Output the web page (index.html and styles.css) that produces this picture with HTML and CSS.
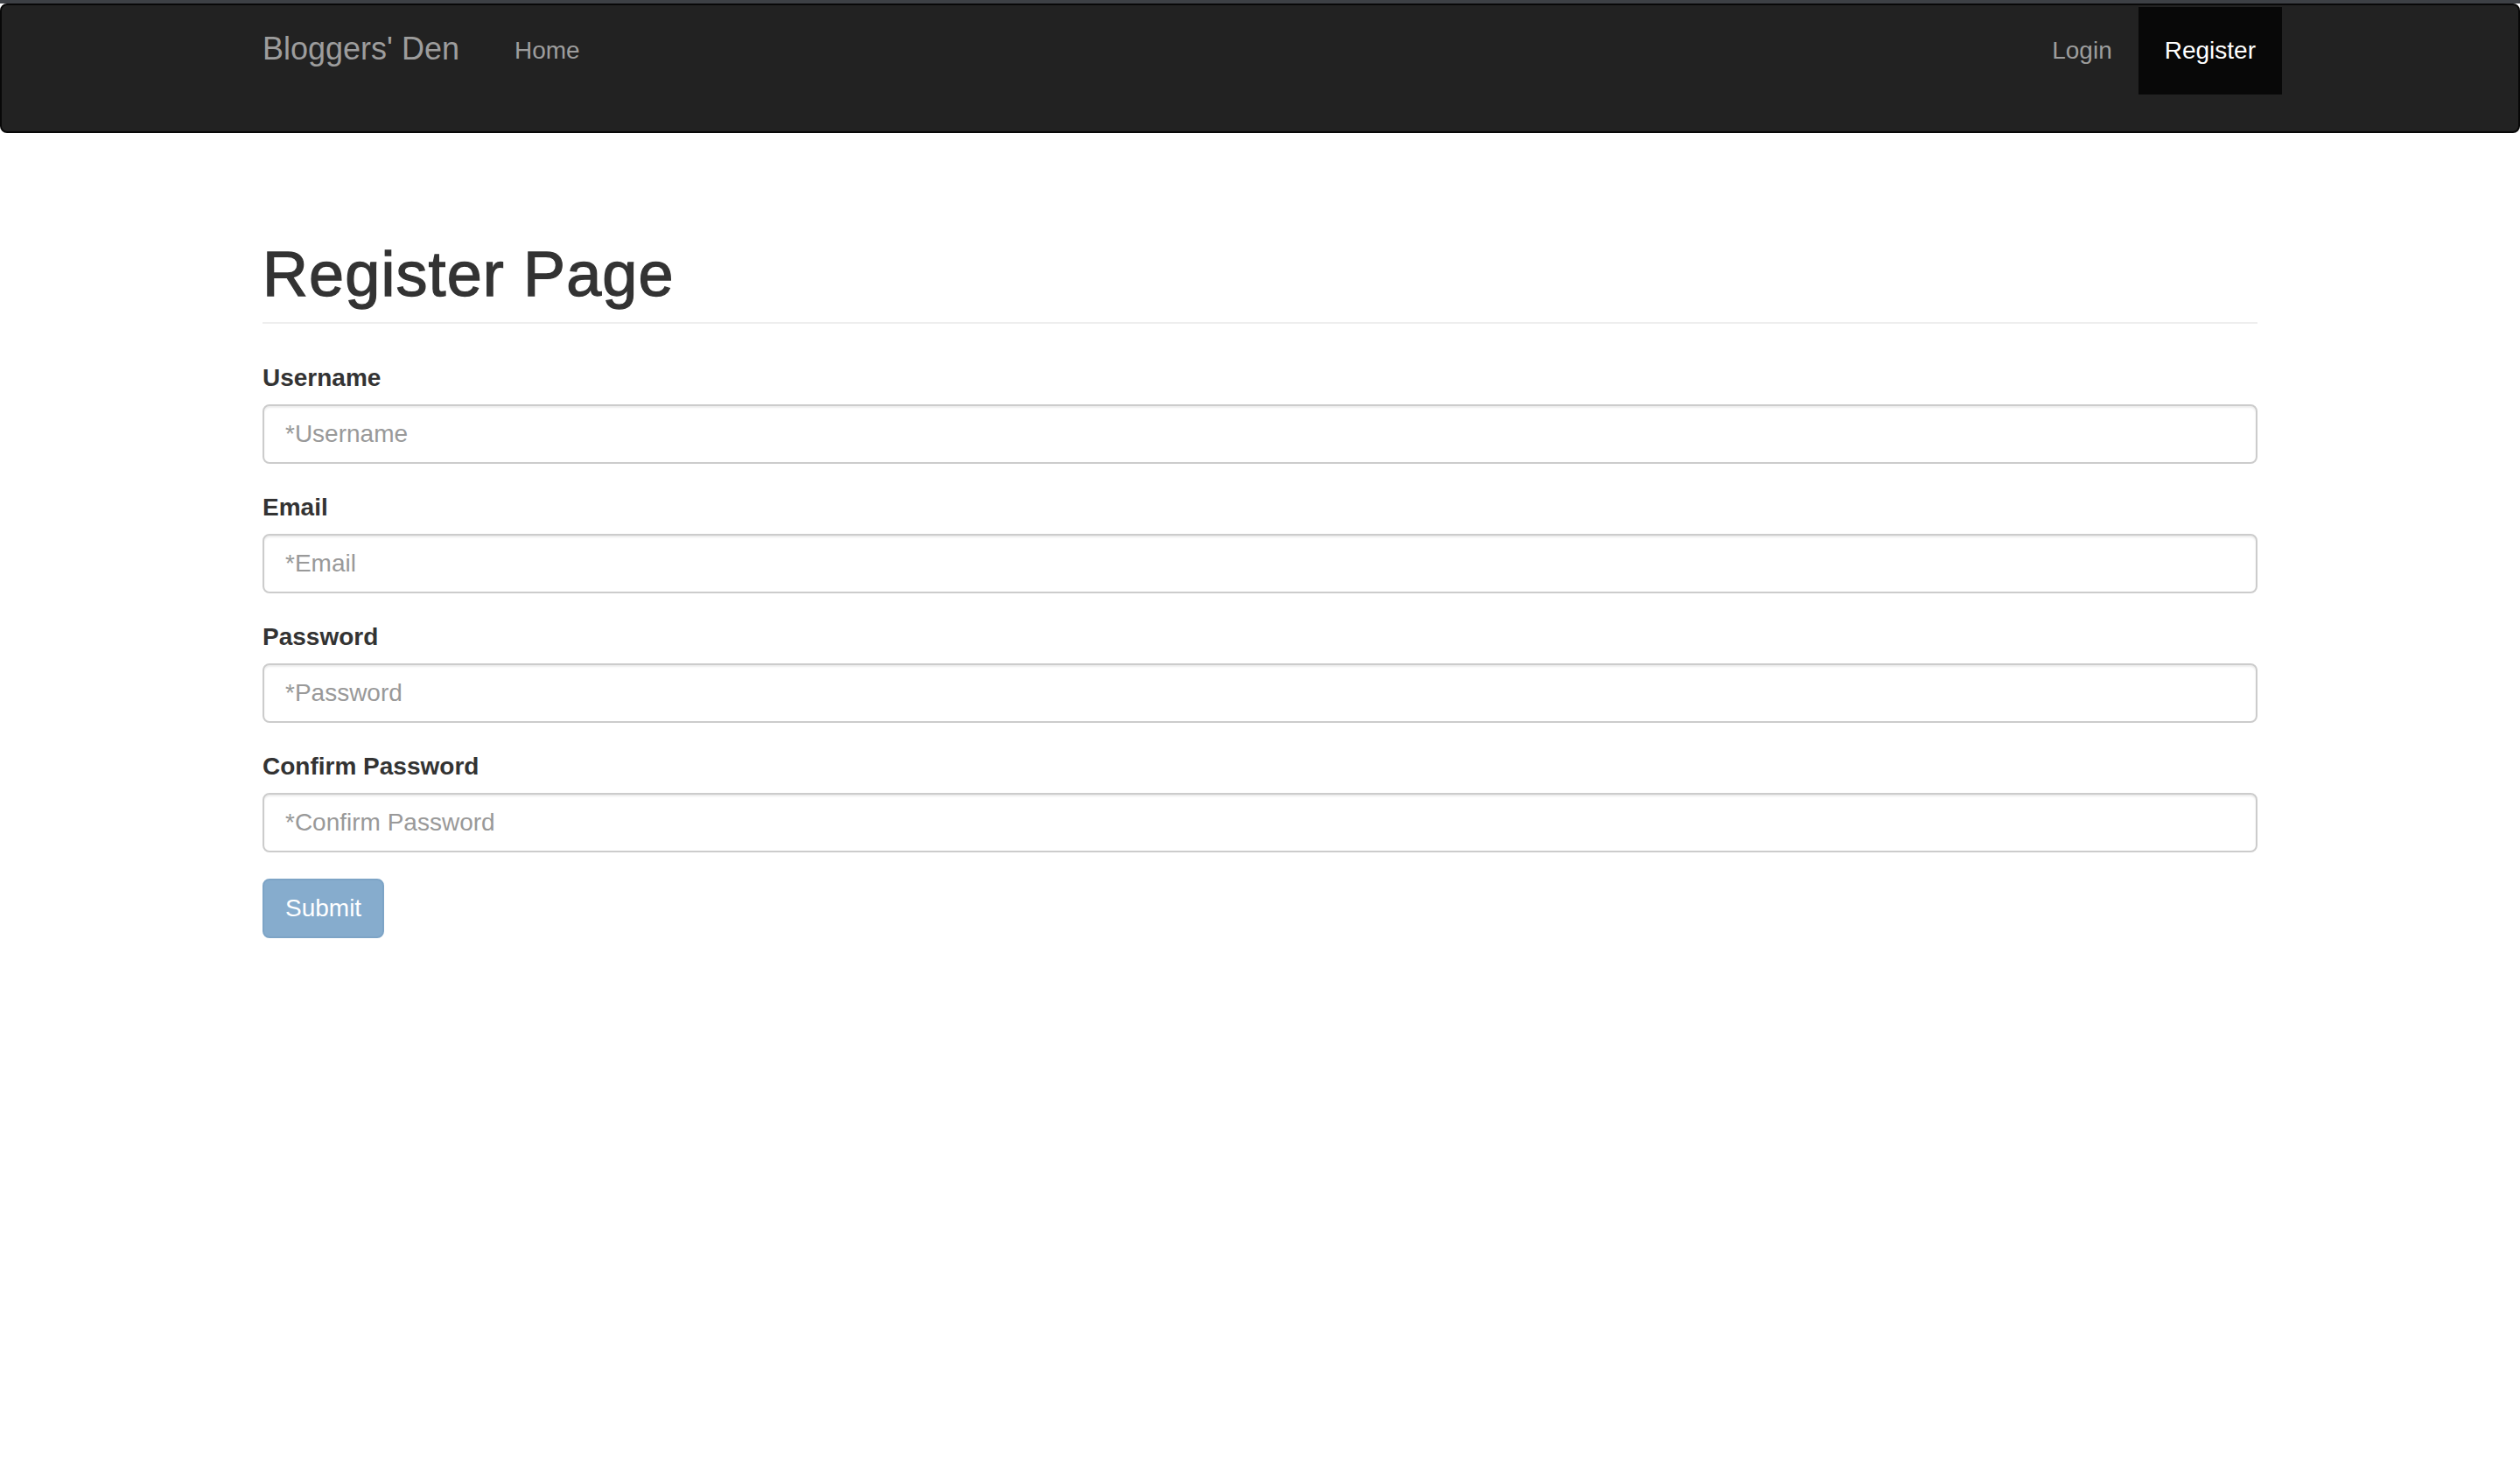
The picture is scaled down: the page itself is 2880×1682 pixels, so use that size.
FILE: index.html
```html
<!DOCTYPE html>
<html lang="en">
<head>
<meta charset="utf-8">
<title>Register Page - Bloggers' Den</title>
<link rel="stylesheet" href="styles.css">
</head>
<body>
<div class="topstrip"></div>
<nav class="navbar">
  <div class="nav-container">
    <div class="nav-left">
      <a class="brand" href="#">Bloggers' Den</a>
      <ul class="nav-links">
        <li><a class="nav-link" href="#">Home</a></li>
      </ul>
    </div>
    <ul class="nav-links nav-right">
      <li><a class="nav-link" href="#">Login</a></li>
      <li><a class="nav-link active" href="#">Register</a></li>
    </ul>
  </div>
</nav>
<main class="container">
  <div class="page-header">
    <h1>Register Page</h1>
  </div>
  <form class="register-form">
    <div class="form-group">
      <label for="username">Username</label>
      <input id="username" type="text" placeholder="*Username">
    </div>
    <div class="form-group">
      <label for="email">Email</label>
      <input id="email" type="email" placeholder="*Email">
    </div>
    <div class="form-group">
      <label for="password">Password</label>
      <input id="password" type="password" placeholder="*Password">
    </div>
    <div class="form-group">
      <label for="confirm">Confirm Password</label>
      <input id="confirm" type="password" placeholder="*Confirm Password">
    </div>
    <button class="btn" type="submit" disabled>Submit</button>
  </form>
</main>
</body>
</html>
```
FILE: styles.css
```css
html, body {
  margin: 0;
  padding: 0;
  background: #fff;
}

body {
  font-family: "Liberation Sans", Arial, Helvetica, sans-serif;
  color: #333;
}

.topstrip {
  height: 4px;
  background: #3d4045;
}

.navbar {
  height: 144px;
  background: #222;
  border: 2px solid #080808;
  border-radius: 8px;
}

.nav-container {
  width: 2340px;
  margin: 0 auto;
  padding: 2px 30px 0;
  box-sizing: border-box;
  display: flex;
  justify-content: space-between;
  align-items: flex-start;
}

.nav-left {
  display: flex;
  align-items: flex-start;
}

.brand {
  display: block;
  margin-left: -30px;
  padding: 28px 30px 32px;
  font-size: 36px;
  line-height: 40px;
  color: #9d9d9d;
  text-decoration: none;
}

.nav-links {
  list-style: none;
  margin: 0;
  padding: 0;
  display: flex;
}

.nav-left .nav-links {
  margin-left: 3px;
}

.nav-right {
  margin-right: -28px;
}

.nav-link {
  display: block;
  padding: 30px;
  font-size: 28px;
  line-height: 40px;
  color: #9d9d9d;
  text-decoration: none;
}

.nav-link.active {
  background: #080808;
  color: #fff;
}

.container {
  width: 2340px;
  margin: 0 auto;
  padding: 0 30px;
  box-sizing: border-box;
}

.page-header {
  margin: 121px 0 42px;
  padding-bottom: 15px;
  border-bottom: 2px solid #eee;
}

.page-header h1 {
  margin: 0;
  font-size: 72px;
  line-height: 80px;
  font-weight: 400;
  letter-spacing: 1.1px;
  -webkit-text-stroke: 1.3px #333;
  color: #333;
}

.form-group {
  margin-bottom: 30px;
}

.form-group label {
  display: block;
  margin-bottom: 10px;
  font-size: 28px;
  line-height: 40px;
  font-weight: bold;
  color: #333;
}

.form-group input {
  display: block;
  width: 100%;
  height: 68px;
  box-sizing: border-box;
  padding: 12px 24px;
  font-family: inherit;
  font-size: 28px;
  line-height: 40px;
  color: #555;
  background: #fff;
  border: 2px solid #ccc;
  border-radius: 8px;
  box-shadow: inset 0 2px 2px rgba(0, 0, 0, 0.075);
  outline: none;
}

.form-group input::placeholder {
  color: #999;
  opacity: 1;
}

.btn {
  display: inline-block;
  height: 68px;
  box-sizing: border-box;
  padding: 12px 24px;
  font-family: inherit;
  font-size: 28px;
  line-height: 40px;
  color: #fff;
  background: #3d7ab0;
  border: 2px solid #2e6da4;
  border-radius: 8px;
  opacity: 0.62;
}
```
